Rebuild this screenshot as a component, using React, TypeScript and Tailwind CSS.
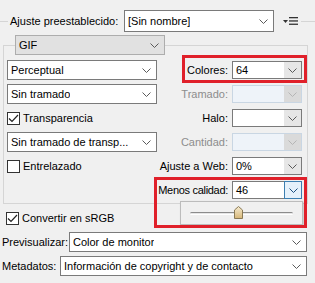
import React from 'react';

const FONT = { fontFamily: '"Liberation Sans", Arial, sans-serif' };

// Small "v" used by every drop-down
const Chevron = ({ color = '#5a5a5a' }: { color?: string }) => (
    <svg width="9" height="5" viewBox="0 0 9 5" className="shrink-0">
        <polyline points="0.5,0.5 4.5,4.5 8.5,0.5" fill="none" stroke={color} strokeWidth="1" />
    </svg>
);

const Select = ({ text, className, gray }: { text: string; className: string; gray?: boolean }) => (
    <div
        className={`flex items-center justify-between border pl-[3px] pr-[5px] ${
            gray ? 'bg-[#e1e1e1] border-[#adadad]' : 'bg-white border-[#7a7a7a]'
        } ${className}`}
    >
        <span className="truncate whitespace-nowrap leading-none">{text}</span>
        <Chevron />
    </div>
);

// Editable combo on the right column (text field + button)
const Combo = ({ value = '', disabled, active }: { value?: string; disabled?: boolean; active?: boolean }) => (
    <div
        className={`flex h-[18px] w-[70px] shrink-0 border ${
            disabled ? 'border-[#c9d6e3] bg-[#eef3f9]' : 'border-[#7a7a7a] bg-white'
        }`}
    >
        <span className="flex-1 pl-[3px] leading-[16px]">{value}</span>
        <div
            className={`flex items-center justify-center ${
                active
                    ? '-m-px h-[18px] w-[18px] border border-[#3c7fb1] bg-[#e5f1fb]'
                    : disabled
                    ? 'w-[17px] bg-[#dadada]'
                    : 'w-[17px] bg-[#e6e6e6]'
            }`}
        >
            <Chevron color={disabled ? '#b5b5b5' : active ? '#1c4f80' : '#5a5a5a'} />
        </div>
    </div>
);

const Field = ({
    label,
    children,
    disabled,
    tight,
}: {
    label: string;
    children: React.ReactNode;
    disabled?: boolean;
    tight?: boolean;
}) => (
    <div className="flex flex-1 items-center justify-end pr-[5px]">
        <span
            className={`mr-[4px] whitespace-nowrap ${tight ? 'tracking-[-0.3px]' : ''} ${
                disabled ? 'text-[#8d8d8d]' : 'text-black'
            }`}
        >
            {label}
        </span>
        {children}
    </div>
);

const Check = ({ label, checked }: { label: string; checked?: boolean }) => (
    <div className="flex items-center">
        <div className="flex h-[13px] w-[13px] items-center justify-center border border-[#333] bg-white">
            {checked && (
                <svg width="11" height="9" viewBox="0 0 11 9">
                    <polyline points="1,4.5 4,7.5 10,1" fill="none" stroke="#222" strokeWidth="1.2" />
                </svg>
            )}
        </div>
        <span className="ml-[3px] whitespace-nowrap">{label}</span>
    </div>
);

export default function App() {
    return (
        <div className="relative h-[283px] w-[315px] overflow-hidden bg-[#f0f0f0] text-[11px] text-black" style={FONT}>
            {/* Preset row */}
            <div className="mt-[10px] flex h-[22px] items-center">
                <div className="h-px w-[8px] bg-[#d5d5d5]" />
                <span className="ml-[2px] w-[114px] whitespace-nowrap">Ajuste preestablecido:</span>
                <Select text="[Sin nombre]" className="h-[22px] w-[150px]" />
                <div className="ml-[9px] flex items-center gap-[1px]">
                    <svg width="5" height="3" viewBox="0 0 5 3">
                        <polygon points="0,0 5,0 2.5,3" fill="#333" />
                    </svg>
                    <svg width="9" height="8" viewBox="0 0 9 8">
                        <rect x="0" y="0" width="9" height="1.3" fill="#333" />
                        <rect x="0" y="3.3" width="9" height="1.3" fill="#333" />
                        <rect x="0" y="6.6" width="9" height="1.3" fill="#333" />
                    </svg>
                </div>
                <div className="ml-[3px] h-px flex-1 bg-[#d5d5d5]" />
            </div>

            {/* Format group */}
            <div className="ml-[3px] mt-[3px] w-[305px]">
                <Select text="GIF" gray className="relative z-10 ml-[12px] h-[20px] w-[150px]" />
                <div className="-mt-[10px] border border-[#d5d5d5] pb-[3px] pt-[14px]">
                    <div className="flex flex-col gap-[4px]">
                        <div className="flex h-[20px] items-center">
                            <div className="w-[153px] pl-[3px]">
                                <Select text="Perceptual" className="h-[20px] w-[150px]" />
                            </div>
                            <Field label="Colores:">
                                <Combo value="64" />
                            </Field>
                        </div>
                        <div className="flex h-[20px] items-center">
                            <div className="w-[153px] pl-[3px]">
                                <Select text="Sin tramado" className="h-[20px] w-[150px]" />
                            </div>
                            <Field label="Tramado:" disabled>
                                <Combo disabled />
                            </Field>
                        </div>
                        <div className="flex h-[20px] items-center">
                            <div className="w-[153px] pl-[3px]">
                                <Check label="Transparencia" checked />
                            </div>
                            <Field label="Halo:">
                                <Combo />
                            </Field>
                        </div>
                        <div className="flex h-[20px] items-center">
                            <div className="w-[153px] pl-[3px]">
                                <Select text="Sin tramado de transp..." className="h-[20px] w-[150px]" />
                            </div>
                            <Field label="Cantidad:" disabled>
                                <Combo disabled />
                            </Field>
                        </div>
                        <div className="flex h-[20px] items-center">
                            <div className="w-[153px] pl-[3px]">
                                <Check label="Entrelazado" />
                            </div>
                            <Field label="Ajuste a Web:">
                                <Combo value="0%" />
                            </Field>
                        </div>
                        <div className="flex h-[20px] items-center">
                            <div className="w-[153px]" />
                            <Field label="Menos calidad:" tight>
                                <Combo value="46" active />
                            </Field>
                        </div>
                    </div>
                </div>
            </div>

            <div className="ml-[6px] mt-[8px] flex h-[13px] items-center">
                <Check label="Convertir en sRGB" checked />
            </div>
            <div className="mt-[7px] flex h-[20px] items-center">
                <span className="ml-[2px] w-[67px] whitespace-nowrap">Previsualizar:</span>
                <Select text="Color de monitor" className="h-[20px] w-[238px]" />
            </div>
            <div className="mt-[4px] flex h-[20px] items-center">
                <span className="ml-[2px] w-[58px] whitespace-nowrap">Metadatos:</span>
                <Select text="Información de copyright y de contacto" className="h-[20px] w-[247px]" />
            </div>

            {/* Quality slider popup */}
            <div className="absolute left-[180px] top-[201px] flex h-[24px] w-[123px] items-center border border-[#bcbcbc] bg-[#f0f0f0] shadow-[1px_1px_2px_rgba(0,0,0,0.2)]">
                <div className="relative ml-[9px] h-[3px] w-[103px] rounded-full border-b border-t border-[#8c8c8c] border-b-white bg-[#e6e6e6]">
                    <svg width="9" height="13" viewBox="0 0 9 13" className="absolute -top-[7px] left-[44px]">
                        <defs>
                            <linearGradient id="thumb" x1="0" y1="0" x2="0" y2="1">
                                <stop offset="0" stopColor="#f6ecd2" />
                                <stop offset="1" stopColor="#d7b777" />
                            </linearGradient>
                        </defs>
                        <polygon points="4.5,0.5 8.5,4 8.5,12.5 0.5,12.5 0.5,4" fill="url(#thumb)" stroke="#8a7a55" />
                    </svg>
                </div>
            </div>

            {/* Red highlight annotations */}
            <div className="pointer-events-none absolute left-[182px] top-[55px] h-[28px] w-[125px] border-[3px] border-[#e0202a]" />
            <div className="pointer-events-none absolute left-[154px] top-[177px] h-[51px] w-[153px] border-[3px] border-[#e0202a]" />
        </div>
    );
}
